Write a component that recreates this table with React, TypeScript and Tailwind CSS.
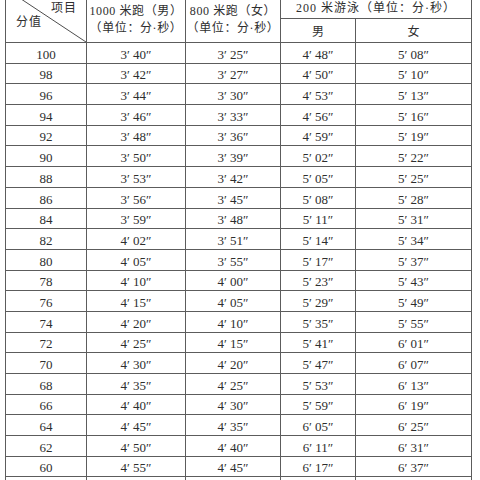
import React from 'react';

type Row = [string, string, string, string, string];

const rows: Row[] = [
  ['100', '3′ 40″', '3′ 25″', '4′ 48″', '5′ 08″'],
  ['98', '3′ 42″', '3′ 27″', '4′ 50″', '5′ 10″'],
  ['96', '3′ 44″', '3′ 30″', '4′ 53″', '5′ 13″'],
  ['94', '3′ 46″', '3′ 33″', '4′ 56″', '5′ 16″'],
  ['92', '3′ 48″', '3′ 36″', '4′ 59″', '5′ 19″'],
  ['90', '3′ 50″', '3′ 39″', '5′ 02″', '5′ 22″'],
  ['88', '3′ 53″', '3′ 42″', '5′ 05″', '5′ 25″'],
  ['86', '3′ 56″', '3′ 45″', '5′ 08″', '5′ 28″'],
  ['84', '3′ 59″', '3′ 48″', '5′ 11″', '5′ 31″'],
  ['82', '4′ 02″', '3′ 51″', '5′ 14″', '5′ 34″'],
  ['80', '4′ 05″', '3′ 55″', '5′ 17″', '5′ 37″'],
  ['78', '4′ 10″', '4′ 00″', '5′ 23″', '5′ 43″'],
  ['76', '4′ 15″', '4′ 05″', '5′ 29″', '5′ 49″'],
  ['74', '4′ 20″', '4′ 10″', '5′ 35″', '5′ 55″'],
  ['72', '4′ 25″', '4′ 15″', '5′ 41″', '6′ 01″'],
  ['70', '4′ 30″', '4′ 20″', '5′ 47″', '6′ 07″'],
  ['68', '4′ 35″', '4′ 25″', '5′ 53″', '6′ 13″'],
  ['66', '4′ 40″', '4′ 30″', '5′ 59″', '6′ 19″'],
  ['64', '4′ 45″', '4′ 35″', '6′ 05″', '6′ 25″'],
  ['62', '4′ 50″', '4′ 40″', '6′ 11″', '6′ 31″'],
  ['60', '4′ 55″', '4′ 45″', '6′ 17″', '6′ 37″'],
];

const cell = 'border border-[#5c5c5c] text-center align-bottom pb-[2px] leading-none text-[13px]';

export default function App() {
  return (
    <div
      className="h-[480px] w-[480px] overflow-hidden bg-white text-[#2e2e2e]"
      style={{ fontFamily: '"Liberation Serif", "Noto Sans CJK SC", serif' }}
    >
      <table className="ml-[5px] mt-[-12px] w-[466px] table-fixed border-collapse text-[12px]">
        <colgroup>
          <col className="w-[81px]" />
          <col className="w-[99px]" />
          <col className="w-[95px]" />
          <col className="w-[75px]" />
          <col className="w-[116px]" />
        </colgroup>
        <thead>
          <tr className="h-[30px]">
            <th rowSpan={2} className="relative border border-[#5c5c5c] p-0 font-normal">
              <svg className="absolute inset-0 h-full w-full" viewBox="0 0 81 54" preserveAspectRatio="none">
                <line x1="0" y1="0" x2="81" y2="54" stroke="#4a4a4a" strokeWidth="1" />
              </svg>
              <span className="absolute left-[45px] top-[13px] text-[12px] leading-none tracking-[1px]">项目</span>
              <span className="absolute left-[10px] top-[27px] text-[12px] leading-none tracking-[1px]">分值</span>
            </th>
            <th rowSpan={2} className="border border-[#5c5c5c] px-0 pt-[8px] text-[12px] font-normal leading-[17px] tracking-[0.6px] whitespace-nowrap">
              <div>1000 米跑（男）</div>
              <div>（单位：分·秒）</div>
            </th>
            <th rowSpan={2} className="border border-[#5c5c5c] px-0 pt-[8px] text-[12px] font-normal leading-[17px] tracking-[0.6px] whitespace-nowrap">
              <div>800 米跑（女）</div>
              <div>（单位：分·秒）</div>
            </th>
            <th colSpan={2} className="border border-[#5c5c5c] pt-[8px] text-[12px] font-normal tracking-[1px]">
              200 米游泳（单位：分·秒）
            </th>
          </tr>
          <tr className="h-[24px]">
            <th className="border border-[#5c5c5c] pt-[2px] text-[12px] font-normal">男</th>
            <th className="border border-[#5c5c5c] pt-[2px] text-[12px] font-normal">女</th>
          </tr>
        </thead>
        <tbody>
          {rows.map((r) => (
            <tr key={r[0]} className="h-[20.7px]">
              {r.map((v, i) => (
                <td key={i} className={cell}>
                  {v}
                </td>
              ))}
            </tr>
          ))}
          <tr className="h-[20.7px]">
            {[0, 1, 2, 3, 4].map((i) => (
              <td key={i} className={cell}></td>
            ))}
          </tr>
        </tbody>
      </table>
    </div>
  );
}
